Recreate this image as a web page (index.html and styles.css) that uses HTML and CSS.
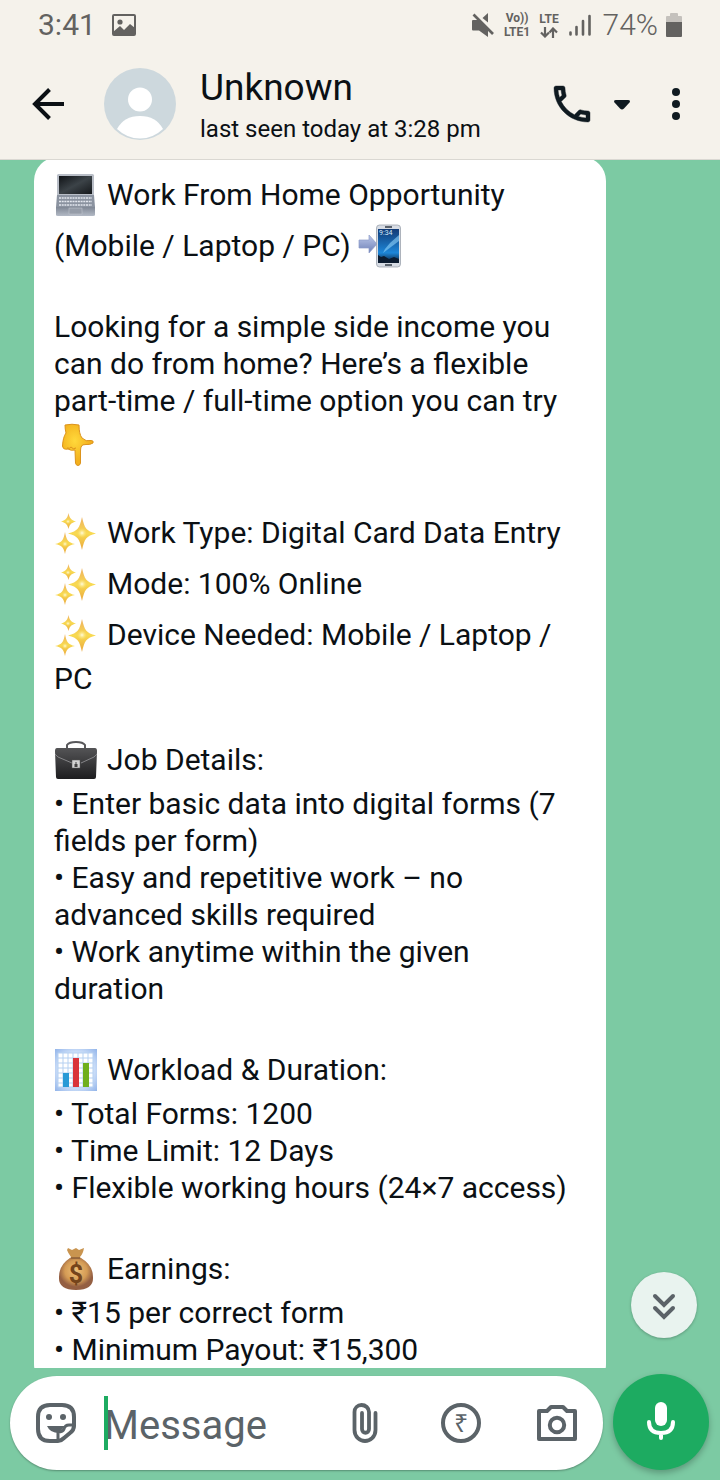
FILE: index.html
```html
<!DOCTYPE html>
<html lang="en">
<head>
<meta charset="utf-8">
<meta name="viewport" content="width=device-width, initial-scale=1">
<title>Unknown</title>
<link rel="stylesheet" href="styles.css">
</head>
<body>
<svg class="defs" aria-hidden="true">
  <defs>
    <linearGradient id="gold" x1="0" y1="0" x2="0" y2="1"><stop offset="0" stop-color="#eeb060"/><stop offset=".5" stop-color="#f8da50"/><stop offset="1" stop-color="#eaa63e"/></linearGradient>
    <radialGradient id="shine"><stop offset="0" stop-color="#fffbe0"/><stop offset="1" stop-color="#fbe36a" stop-opacity="0"/></radialGradient>
    <linearGradient id="metal" x1="0" y1="0" x2="0" y2="1"><stop offset="0" stop-color="#7f8794"/><stop offset="1" stop-color="#b3bac6"/></linearGradient>
    <linearGradient id="glass" x1="0" y1="0" x2="1" y2="1"><stop offset="0" stop-color="#101317"/><stop offset=".5" stop-color="#3c4348"/><stop offset="1" stop-color="#15181b"/></linearGradient>
    <linearGradient id="arrow" x1="0" y1="0" x2="0" y2="1"><stop offset="0" stop-color="#bcc8ea"/><stop offset="1" stop-color="#6d80b6"/></linearGradient>
    <linearGradient id="sky" x1="0" y1="0" x2="0" y2="1"><stop offset="0" stop-color="#123a75"/><stop offset=".7" stop-color="#1d86d8"/><stop offset="1" stop-color="#0b1a30"/></linearGradient>
    <radialGradient id="skin" cx=".4" cy=".4"><stop offset="0" stop-color="#ffd93b"/><stop offset="1" stop-color="#f3b01d"/></radialGradient>
    <linearGradient id="leather" x1="0" y1="0" x2="0" y2="1"><stop offset="0" stop-color="#545456"/><stop offset="1" stop-color="#1d1d1f"/></linearGradient>
    <radialGradient id="frame" cx=".5" cy=".5" r=".7"><stop offset=".5" stop-color="#dbe9fc"/><stop offset="1" stop-color="#93b5ea"/></radialGradient>
    <radialGradient id="sack" cx=".5" cy=".4"><stop offset="0" stop-color="#efc077"/><stop offset=".65" stop-color="#d49b55"/><stop offset="1" stop-color="#945f42"/></radialGradient>
    <symbol id="sparkles" viewBox="0 0 42 42">
      <path fill="url(#gold)" d="M28 5C30.500 16 32 19 42 21.500C32 24 30.500 27 28 38C25.500 27 24 24 14 21.500C24 19 25.500 16 28 5Z"/>
      <path fill="url(#gold)" d="M11 20C12.500 28 14 30.500 21 32C14 33.500 12.500 35 11 42C9.500 35 8 33.500 1 32C8 30.500 9.500 28 11 20Z"/>
      <path fill="url(#gold)" d="M14.500 1C15.500 6 17 8 22 9.500C17 11 15.500 12.500 14.500 17C13.500 12.500 12 11 7 9.500C12 8 13.500 6 14.500 1Z"/>
      <circle cx="28" cy="21" r="5" fill="url(#shine)"/><circle cx="11" cy="32" r="3" fill="url(#shine)"/><circle cx="14" cy="9.500" r="2.500" fill="url(#shine)"/>
    </symbol>
  </defs>
</svg>

<div class="status">
  <span class="clock">3:41</span>
  <svg class="picture" viewBox="0 0 24 22"><rect x="1" y="1" width="22" height="20" rx="1" fill="none" stroke="#636260" stroke-width="2"/><circle cx="8" cy="8" r="2.600" fill="#636260"/><path fill="#636260" d="M1 18L8 12L12 16L18 10L23 14V21H1Z"/></svg>
  <div class="status-right">
    <svg class="mute" viewBox="0 0 22 24"><path fill="#636260" d="M16 0V9.500L10.500 5ZM0 8Q0 7 1 7H6L16 17V24L7 17.500H1Q0 17.500 0 16.500Z"/><path d="M1.500 1.500L21 21" stroke="#636260" stroke-width="2.600"/></svg>
    <span class="volte"><span>Vo))</span><span>LTE1</span></span>
    <span class="lte"><span>LTE</span><svg class="updown" viewBox="0 0 18 11"><path fill="none" stroke="#636260" stroke-width="2.200" d="M5 0V9M1 5.500L5 9.500L9 5.500M13 11V2M9.500 5.500L13 1.500L17 5.500"/></svg></span>
    <svg class="bars" viewBox="0 0 22 24"><path stroke="#636260" stroke-width="2.600" stroke-linecap="round" d="M1.500 19.500V21.500M7.500 14V21.500M14 8V21.500M20.500 3V21.500"/></svg>
    <span class="percent">74%</span>
    <svg class="battery" viewBox="0 0 16 24"><path fill="#c4c1bc" d="M4 1Q4 0 5 0H11Q12 0 12 1V3H15Q16 3 16 4V9H0V4Q0 3 1 3H4Z"/><path fill="#636260" d="M0 9H16V23Q16 24 15 24H1Q0 24 0 23Z"/></svg>
  </div>
</div>

<header class="appbar">
  <button class="icon-btn" aria-label="Back"><svg viewBox="0 0 48 48"><path fill="none" stroke="#0b1014" stroke-width="4" d="M40 24H11M25.500 9.500L11 24L25.500 38.500"/></svg></button>
  <svg class="avatar" viewBox="0 0 72 72"><circle cx="36" cy="36" r="36" fill="#cdd8dd"/><circle cx="36" cy="31.500" r="12" fill="#fff"/><path fill="#fff" d="M13 61Q20 48 36 48T59 61Q49 70.500 36 70.500T13 61Z"/></svg>
  <div class="contact">
    <h1 class="name">Unknown</h1>
    <p class="seen">last seen today at 3:28 pm</p>
  </div>
  <button class="icon-btn" aria-label="Call"><svg viewBox="0 0 24 24"><path fill="#0f1a20" stroke="#0f1a20" stroke-width=".2" d="M6.540 5c.06.89.21 1.760.45 2.590l-1.200 1.200c-.41-1.200-.67-2.470-.76-3.790h1.510m9.860 12.020c.85.24 1.720.39 2.600.45v1.490c-1.320-.09-2.590-.35-3.800-.75l1.200-1.190M7.500 3H4c-.55 0-1 .45-1 1 0 9.390 7.610 17 17 17 .55 0 1-.45 1-1v-3.490c0-.55-.45-1-1-1-1.240 0-2.450-.2-3.570-.57-.1-.04-.21-.05-.31-.05-.26 0-.51.1-.71.29l-2.200 2.200c-2.830-1.450-5.150-3.760-6.590-6.590l2.200-2.200c.28-.28.36-.67.25-1.020C8.700 6.450 8.500 5.250 8.500 4c0-.55-.45-1-1-1z"/></svg></button>
  <button class="icon-btn drop" aria-label="Call options"><svg viewBox="0 0 48 48"><path fill="#0f1a20" d="M18 20H30Q33 20 31.500 22.500L26 28.500Q24 30.500 22 28.500L16.500 22.500Q15 20 18 20Z"/></svg></button>
  <button class="icon-btn more" aria-label="More"><svg viewBox="0 0 48 48"><g fill="#0f1a20"><circle cx="24" cy="12" r="4"/><circle cx="24" cy="24" r="4"/><circle cx="24" cy="36" r="4"/></g></svg></button>
</header>

<main class="chat">
  <div class="scroller">
    <article class="bubble">
      <p class="line rich"><svg class="emoji" viewBox="0 0 42 42"><rect x="3" y="0" width="37" height="22" rx="1.500" fill="#b9bec7"/><rect x="5" y="2" width="33" height="18" fill="url(#glass)"/><path fill="#8b93a0" d="M3 21H40L41 33H2Z"/><path stroke="#e3e7ee" stroke-width="1.700" stroke-dasharray="2 .7" d="M5 24H38M5 27.500H38M5 31H38"/><path fill="url(#metal)" d="M2 33H41V41Q41 42 39 42H4Q2 42 2 41Z"/><rect x="15" y="34" width="13" height="6" fill="#959ca8" stroke="#c5cad3" stroke-width=".5"/></svg>Work From Home Opportunity</p>
      <p class="line rich tight">(Mobile / Laptop / PC)<svg class="emoji" viewBox="0 0 42 42"><path fill="url(#arrow)" stroke="#8d9cc8" stroke-width=".7" d="M0 15H10V10L18 19L10 28V23H0Z"/><rect x="17.500" y="0" width="24" height="42" rx="3" fill="#d7dce4" stroke="#9299a5" stroke-width=".7"/><rect x="19" y="4" width="21" height="34" fill="url(#sky)"/><path fill="#8fd3fb" opacity=".6" d="M26 24L31 18L40 10V16L32 22L24 28Z"/><path fill="#0c1c30" d="M19 30L22 32L25 31L30 34L35 32L40 34V38H19Z"/><path stroke="#333b46" stroke-width="1.500" d="M26 2H33M26 40H33"/><text class="phone-time" x="20" y="10">9:34</text></svg></p>
      <p class="line"></p>
      <p class="line">Looking for a simple side income you</p>
      <p class="line">can do from home? Here’s a flexible</p>
      <p class="line">part-time / full-time option you can try</p>
      <p class="line rich"><svg class="emoji" viewBox="0 0 42 42"><path fill="url(#skin)" stroke="#dc931c" stroke-width="1" d="M11 1Q18-.5 25 1Q25 10 28 14Q32 18 37 16.500Q40 16.500 39 19Q36 21 32 20.500Q28 20 27 23Q26.500 25 26.500 27V39Q26 41.500 24 41.500Q22 41.500 21.500 39L21 26Q17 27 14 25Q9 26 8.500 22Q9 13 12 9Q11 5 11 1Z"/><path fill="none" stroke="#dc931c" stroke-width="1" d="M13 24Q16 25 17 23Q19 26 22 24"/></svg></p>
      <p class="line"></p>
      <p class="line rich"><svg class="emoji"><use href="#sparkles"/></svg>Work Type: Digital Card Data Entry</p>
      <p class="line rich"><svg class="emoji"><use href="#sparkles"/></svg>Mode: 100% Online</p>
      <p class="line rich"><svg class="emoji"><use href="#sparkles"/></svg>Device Needed: Mobile / Laptop /</p>
      <p class="line">PC</p>
      <p class="line"></p>
      <p class="line rich"><svg class="emoji" viewBox="0 0 42 42"><path fill="none" stroke="#58585b" stroke-width="2" d="M13 9V6Q15 3 22 3T31 6V9"/><path fill="url(#leather)" d="M3 9H41Q43 9 43 12L42 38Q42 40 40 40H4Q2 40 2 38L1 12Q1 9 3 9Z"/><path fill="none" stroke="#858588" stroke-width="1" d="M1 15L4 18L18 24M43 15L40 18L27 24"/><rect x="18" y="21" width="8" height="8" fill="#d3d3d3" stroke="#555" stroke-width=".5"/><path fill="#444" d="M20.500 25H23.500V28H20.500ZM21.500 23H22.500V25H21.500Z"/></svg>Job Details:</p>
      <p class="line">• Enter basic data into digital forms (7</p>
      <p class="line">fields per form)</p>
      <p class="line">• Easy and repetitive work – no</p>
      <p class="line">advanced skills required</p>
      <p class="line">• Work anytime within the given</p>
      <p class="line">duration</p>
      <p class="line"></p>
      <p class="line rich"><svg class="emoji" viewBox="0 0 42 42"><rect x="1" y="0" width="42" height="42" fill="url(#frame)"/><rect x="4" y="4" width="35" height="34" fill="#fff"/><path fill="none" stroke="#b5d0f1" stroke-width="1" d="M4 4H39V38H4ZM4 9H39M4 14H39M4 19H39M4 24H39M4 29H39M4 34H39M9 4V38M14 4V38M19 4V38M24 4V38M29 4V38M34 4V38"/><path fill="#299ad6" d="M9 24H15V38H9Z"/><path fill="#d9343a" d="M19 9H25V38H19Z"/><path fill="#6faf1d" d="M29 14H35V38H29Z"/></svg>Workload &amp; Duration:</p>
      <p class="line">• Total Forms: 1200</p>
      <p class="line">• Time Limit: 12 Days</p>
      <p class="line">• Flexible working hours (24×7 access)</p>
      <p class="line"></p>
      <p class="line rich"><svg class="emoji" viewBox="0 0 42 42"><path fill="#c9944f" d="M14 0L18 2L22 0L25 2L30 0Q29 6 26 9L30 14H13L17 9Q14 5 13 2Z"/><path fill="url(#sack)" d="M16 10H27Q39 17 39 29Q40 42 22 42Q4 42 5 29Q5 17 16 10Z"/><path stroke="#8a5c37" stroke-width="1.500" d="M17 10H26"/><text class="dollar" x="22" y="35">$</text></svg>Earnings:</p>
      <p class="line">• ₹15 per correct form</p>
      <p class="line">• Minimum Payout: ₹15,300</p>
    </article>
  </div>
  <button class="jump" aria-label="Scroll to latest"><svg viewBox="0 0 66 66"><path fill="none" stroke="#5b6268" stroke-width="4" stroke-linecap="round" d="M24 24L33 33L42 24M24 36L33 45L42 36"/></svg></button>
</main>

<footer class="composer">
  <div class="pill">
    <button class="icon-btn" aria-label="Stickers"><svg viewBox="0 0 48 48"><path fill="none" stroke="#5b6368" stroke-width="4" stroke-linejoin="round" d="M18 6H30Q42 6 42 18V27Q42 31 38 34L32 39Q29 42 26 42H18Q6 42 6 30V18Q6 6 18 6Z"/><path fill="none" stroke="#5b6368" stroke-width="3" d="M26 42V33Q31 33 32 30Q33 26 37 26H42"/><circle cx="17" cy="18" r="3" fill="#5b6368"/><circle cx="31" cy="18" r="3" fill="#5b6368"/><path fill="#5b6368" d="M15 27H33L27 34Q18 34 15 27Z"/></svg></button>
    <label class="field"><input class="message" type="text" placeholder="Message" aria-label="Message"></label>
    <div class="tools">
      <button class="icon-btn" aria-label="Attach"><svg viewBox="0 0 48 48"><path fill="none" stroke="#5b6368" stroke-width="3.800" stroke-linecap="round" d="M34.500 14V31C34.500 38 29 42 24 42S13.500 38 13.500 31V13C13.500 9 16.500 6 20.500 6S28 9 28 13V30C28 35 21 35 21 30V14"/></svg></button>
      <button class="icon-btn" aria-label="Payment"><svg viewBox="0 0 48 48"><circle cx="24" cy="24" r="18" fill="none" stroke="#5b6368" stroke-width="4"/><text class="rupee" x="24" y="33">₹</text></svg></button>
      <button class="icon-btn" aria-label="Camera"><svg viewBox="0 0 48 48"><path fill="none" stroke="#5b6368" stroke-width="4" stroke-linejoin="round" d="M6 12H14L18 8H30L34 12H42V40H6Z"/><circle cx="24" cy="26" r="7.200" fill="none" stroke="#5b6368" stroke-width="4"/></svg></button>
    </div>
  </div>
  <button class="mic" aria-label="Record voice message"><svg viewBox="0 0 96 96"><rect x="42" y="28" width="12" height="24" rx="6" fill="#fff"/><path fill="none" stroke="#fff" stroke-width="4" stroke-linecap="round" d="M36 48Q36 59 48 59T60 48M48 60V64"/></svg></button>
</footer>
</body>
</html>
```
FILE: styles.css
```css
* { box-sizing: border-box; }
body {
  margin: 0;
  height: 100vh;
  display: flex;
  flex-direction: column;
  background: #7ccaa3;
  color: #0b1014;
  font-family: Roboto, "Noto Sans", sans-serif;
}
h1, p { margin: 0; font-weight: 400; }
svg { display: block; flex: none; }
button { padding: 0; border: 0; background: none; flex: none; cursor: pointer; }
.defs { position: absolute; width: 0; height: 0; }

.status {
  display: flex;
  align-items: center;
  flex: none;
  height: 50px;
  padding: 0 38px;
  gap: 16px;
  background: #f5f2eb;
  color: #636260;
}
.clock { font-size: 30px; line-height: 32px; }
.percent { font-size: 30px; line-height: 32px; font-weight: 300; }
.picture { width: 24px; height: 22px; }
.status-right { display: flex; align-items: center; margin-left: auto; }
.mute { width: 22px; height: 24px; margin-right: 9px; }
.volte, .lte {
  display: flex;
  flex-direction: column;
  align-items: center;
  font-weight: 700;
  font-size: 12px;
  line-height: 14px;
}
.volte { width: 29px; margin-right: 6px; }
.lte { width: 23px; margin-right: 8px; }
.updown { width: 18px; height: 11px; margin-top: 1px; }
.bars { width: 22px; height: 24px; margin-right: 12px; }
.battery { width: 16px; height: 24px; margin-left: 8px; }

.appbar {
  display: flex;
  align-items: center;
  flex: none;
  height: 110px;
  padding: 0 20px 1px 24px;
  background: #f5f2eb;
  border-bottom: 1px solid #dad8d2;
}
.icon-btn { width: 48px; height: 48px; }
.icon-btn svg { width: 48px; height: 48px; }
.drop { width: 52px; padding-left: 2px; }
.more { margin-left: 4px; }
.avatar { width: 72px; height: 72px; margin: 0 24px 0 32px; }
.contact { flex: 1; min-width: 0; padding-top: 4px; }
.name { font-size: 37px; line-height: 46px; }
.seen { font-size: 24px; line-height: 36px; white-space: nowrap; }

.chat { position: relative; flex: 1; min-height: 0; }
.scroller { height: 100%; overflow: hidden; }
.bubble {
  margin: -3px 114px 0 34px;
  padding: 12px 20px 20px;
  border-radius: 24px;
  background: #fff;
  font-size: 30px;
}
.line { height: 37px; line-height: 37px; white-space: nowrap; }
.rich { display: flex; align-items: center; gap: 11px; height: 51px; }
.tight { gap: 8px; }
.emoji { width: 42px; height: 42px; overflow: visible; }
.phone-time { font-size: 7px; fill: #d5e9fb; }
.dollar { font-size: 25px; font-weight: 700; fill: #74441b; text-anchor: middle; }
.jump {
  position: absolute;
  right: 23px;
  bottom: 30px;
  width: 66px;
  height: 66px;
  border-radius: 50%;
  background: #e9f3ef;
  box-shadow: 0 1px 3px rgba(0, 0, 0, .25);
}

.composer {
  display: flex;
  align-items: flex-end;
  flex: none;
  height: 112px;
  gap: 10px;
  padding: 0 11px 10px 10px;
}
.pill {
  display: flex;
  align-items: center;
  flex: 1;
  min-width: 0;
  height: 94px;
  padding: 0 22px;
  border-radius: 47px;
  background: #fff;
  box-shadow: 0 1px 2px rgba(0, 0, 0, .3);
}
.field { position: relative; flex: 1; min-width: 0; margin-left: 24px; }
.field::before {
  content: "";
  position: absolute;
  left: 0;
  top: 0;
  width: 4px;
  height: 54px;
  background: #1dab61;
}
.message {
  display: block;
  width: 100%;
  height: 54px;
  padding: 4px 0 0;
  border: 0;
  outline: 0;
  background: none;
  font: 400 40px/50px Roboto, "Noto Sans", sans-serif;
  color: #0b1014;
}
.message::placeholder { color: #5b6368; opacity: 1; }
.tools { display: flex; gap: 48px; }
.rupee { font-size: 25px; font-weight: 500; fill: #5b6368; text-anchor: middle; }
.mic {
  width: 96px;
  height: 96px;
  border-radius: 50%;
  background: #1dab61;
  box-shadow: 0 3px 6px rgba(0, 0, 0, .25);
}
```
